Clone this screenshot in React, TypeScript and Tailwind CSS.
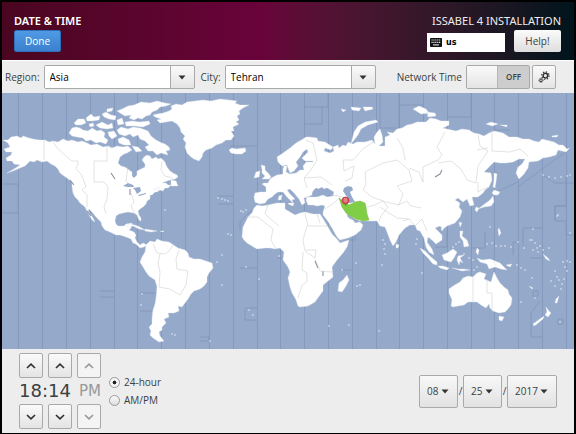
import React, { useState } from 'react';

const ZONE_LINES = [
  18, 42, 66, 90, 114, 137, 161, 185, 209, 233, 257, 280, 304, 328, 352, 376, 399, 423, 447, 471,
  494, 518, 542, 566,
];

// Timezone boundaries that leave the straight meridians
const ZONE_DETOURS = [
  'M2 184H18V213H2',
  'M230 146H257M218 196H233M218 204H233',
  'M304 107H328V93M304 124H322V107M399 105H423M399 93V128H380V93',
  'M447 117H471V93M494 130H510',
  'M518 187L542 169L570 149M542 175L555 183H574M555 220V206H566V175',
  'M494 193L518 182',
  'M555 221V206H566M555 221H566V235H574M523 246V228H542M513 255V242H518',
  'M530 258H542M540 301L531 313V337H542M485 232V248H471',
  'M100 291H114M100 297H114M140 293H157M140 311H153M200 337H209V341H200',
  'M240 268H257M257 308H245V320H257M277 258H282M340 270H352M347 240H355V235',
  'M252 210L240 222V230M447 230V247H435',
  'M533 291H538V296H533ZM558 319H563V324H558Z',
];

const LAND = [
  // North and Central America
  'M3 140L8 140L11 137L17 136L21 138L23 136L29 138L33 139L39 140L45 140L49 142L53 141L58 142L63 139L68 141L72 140L78 142L82 141L87 143L91 145L97 144L103 147L108 146L112 148L117 146L123 147L128 146L132 150L127 153L124 154L120 157L118 163L121 166L125 167L129 170L132 172L132 176L134 178L137 175L137 171L141 169L145 167L145 164L142 160L144 157L147 155L150 156L152 159L156 157L158 159L161 158L165 162L166 165L167 167L170 171L173 173L177 175L178 177L175 179L170 180L167 181L162 183L166 183L168 185L171 185L168 188L165 188L163 191L160 190L157 192L155 192L152 195L150 195L150 199L147 201L146 204L143 207L140 209L138 211L139 215L141 218L141 221L139 220L137 215L134 213L128 212L123 213L119 214L116 216L115 221L116 224L118 226L124 226L126 224L132 223L131 228L129 230L134 232L136 235L135 238L137 242L140 245L143 243L147 245L144 247L140 248L136 244L133 243L131 239L126 237L120 235L116 235L110 232L105 230L102 226L101 222L96 217L92 212L89 209L88 211L93 218L95 222L92 220L88 213L85 207L80 203L78 200L75 197L73 193L72 187L72 182L67 178L64 176L60 173L58 169L55 166L51 164L47 161L42 162L37 160L34 162L30 161L25 166L20 168L13 171L7 173L14 169L20 165L14 164L12 161L7 161L6 158L11 155L12 152L6 152L4 149L10 147L8 143Z',
  // Canadian arctic
  'M120 113L117 111L122 109L128 106L134 105L141 102L150 103L157 101L165 103L171 104L166 106L160 107L157 110L152 112L150 115L146 116L142 119L138 118L134 120L129 118L131 115L125 116Z',
  'M125 122L132 121L140 122L149 121L150 124L143 127L134 126L126 126Z',
  'M117 130L121 127L128 129L133 127L140 128L148 131L151 136L156 140L162 143L165 144L169 147L170 150L166 151L168 155L161 153L157 155L153 151L148 151L145 147L149 145L145 141L140 139L138 135L133 137L130 134L125 136L119 134Z',
  'M72 128L76 127L80 128L83 130L88 131L92 128L97 131L101 130L105 133L104 137L108 140L106 144L100 142L96 143L91 140L86 141L83 138L77 137L72 136L69 133Z',
  'M74 123L78 119L84 119L86 123L81 125L76 125Z',
  'M86 118L91 114L94 117L100 116L99 120L92 121L87 121Z',
  'M96 125L102 122L108 125L112 123L113 128L107 129L100 128Z',
  'M102 114L106 112L111 115L116 116L115 120L109 119L104 117Z',
  'M118 139L123 137L129 140L131 145L124 145L119 143Z',
  'M108 132L114 131L117 136L112 139L109 136ZM117 120L122 118L124 124L118 125ZM132 146L138 147L142 151L136 152ZM107 109L113 108L112 111L107 112ZM89 124L93 123L94 126L90 127Z',
  'M171 180L176 181L178 186L171 186ZM154 188L159 187L159 189L154 190Z',
  // Greenland and Iceland
  'M153 115L157 114L163 113L169 111L172 109L171 106L176 104L182 105L187 102L195 101L203 100L211 101L220 99L229 100L237 101L235 103L240 105L249 105L243 108L239 111L240 114L237 116L239 120L236 122L239 124L233 127L234 131L231 131L234 136L231 140L226 140L222 143L216 145L212 148L206 150L203 153L202 157L199 161L194 159L191 157L187 153L185 147L186 143L183 139L185 136L181 132L180 128L177 124L172 121L166 122L160 123L157 120L161 119L155 117Z',
  'M229 150L232 148L236 149L245 148L246 151L242 154L236 154L231 153Z',
  // South America
  'M146 245L150 241L155 242L157 239L162 241L169 242L172 244L178 248L185 250L188 253L189 257L194 259L200 259L206 261L212 263L213 268L209 273L207 277L207 282L204 286L200 289L194 291L191 294L188 299L185 303L182 307L178 306L179 311L174 313L168 313L169 317L164 319L166 323L162 327L162 330L159 332L160 336L164 341L159 342L153 338L150 335L151 331L149 327L152 324L152 318L153 310L155 304L156 298L157 287L155 280L149 276L146 272L143 267L140 262L142 257L145 252Z',
  // Caribbean
  'M126 226L131 224L138 226L145 230L139 229L133 226L128 227ZM145 229L151 230L157 231L151 232L145 231ZM160 231L164 231L163 232Z',
  // Europe and Asia
  'M255 202L254 197L255 193L260 192L266 192L266 187L262 184L264 183L268 183L270 179L273 177L277 175L283 174L283 169L284 166L287 166L286 172L290 174L296 173L300 170L304 170L303 166L306 162L313 162L313 161L305 161L302 158L305 155L308 152L307 149L303 152L300 157L296 162L298 166L294 171L290 173L288 168L287 165L282 166L278 162L277 157L283 153L290 148L296 143L303 139L306 137L310 137L317 138L318 141L325 142L333 147L331 150L325 148L324 151L330 153L334 151L333 147L338 145L339 148L343 145L346 146L348 142L353 144L357 142L365 142L372 140L375 144L374 137L377 132L380 129L382 135L383 142L379 146L385 146L385 137L390 135L387 132L393 133L397 129L402 128L407 125L412 124L417 122L426 122L430 118L436 119L441 121L449 121L449 125L443 128L447 129L456 131L462 129L469 130L474 133L479 134L484 136L489 133L494 131L503 133L509 137L517 137L523 139L529 139L534 141L539 142L542 139L554 142L559 145L563 145L567 149L570 148L566 152L558 150L556 155L549 157L543 158L538 161L529 162L528 168L524 174L519 179L516 173L518 167L522 164L525 159L519 159L513 162L506 163L500 163L494 162L490 166L484 172L491 173L492 180L489 187L485 190L483 193L478 197L472 197L474 205L470 206L467 199L463 202L458 198L455 200L460 203L459 207L462 211L460 217L455 223L447 226L443 229L440 226L435 228L439 232L442 235L442 240L436 244L432 240L428 237L427 242L432 249L434 255L429 252L426 247L424 238L420 231L417 230L415 225L410 225L405 228L399 235L396 242L393 246L390 240L387 232L385 227L380 226L377 221L368 221L360 221L353 218L348 213L347 216L350 219L353 220L355 223L360 222L363 225L361 230L355 235L348 238L340 240L337 237L332 228L327 220L323 215L323 212L325 206L322 205L317 206L313 205L308 205L306 200L307 197L317 197L323 195L327 197L333 196L334 192L327 188L325 190L322 187L318 189L316 188L313 192L312 195L307 197L304 198L305 203L302 205L299 199L294 193L290 189L287 190L290 194L295 199L292 200L293 203L287 197L283 192L278 192L275 194L272 197L268 199L265 203L260 204L257 203Z',
  'M351 144L354 132L358 126L365 122L376 120L378 122L368 125L361 129L358 135Z',
  'M341 109L346 110L343 112ZM351 107L361 108L359 111L352 110ZM363 107L372 107L373 109L365 111ZM413 109L419 106L426 109L429 113L421 114ZM427 112L435 113L436 116L428 117ZM486 124L491 122L498 124L492 126ZM500 125L507 125L507 127ZM552 136L558 135L557 137L552 137Z',
  // Britain and Ireland
  'M261 165L265 166L265 170L269 174L271 177L269 179L262 179L265 176L262 173L262 169ZM256 172L260 171L259 177L254 178Z',
  // Africa
  'M257 205L262 206L268 205L277 203L285 203L285 209L290 212L295 215L300 213L305 212L313 214L320 214L322 217L328 227L332 234L337 239L340 243L349 240L347 247L343 253L337 260L332 267L333 277L328 281L323 285L323 291L320 295L315 302L308 306L300 307L298 306L296 300L295 298L292 293L290 287L288 278L290 272L288 267L283 260L284 252L280 248L275 249L270 248L265 248L257 249L247 243L244 240L242 237L243 227L246 221L248 217L252 213L254 208Z',
  'M347 275L349 280L346 286L342 292L338 291L339 283L343 280Z',
  'M289 203L294 203L293 206L288 204ZM279 196L282 195L281 200L278 200Z',
  // Australia and New Zealand
  'M449 289L453 286L460 282L463 278L468 276L473 277L477 273L480 272L486 274L484 279L491 282L494 272L497 278L500 283L504 287L508 290L509 294L512 298L511 305L508 309L505 312L499 313L493 311L490 308L489 304L486 308L481 305L477 302L468 302L464 305L458 306L453 307L451 306L452 300L449 293Z',
  'M499 316L504 317L502 321L499 320ZM546 307L549 311L551 313L548 317L545 315L547 312ZM544 316L543 319L537 324L534 326L533 324Z',
  // Japan and Sakhalin
  'M494 173L497 174L496 182L495 188L493 187L494 180ZM494 190L500 192L498 195L494 195L492 193ZM493 196L494 202L491 206L484 207L478 209L486 203L490 200ZM476 207L479 208L477 212L475 210Z',
  // South east Asia and Oceania
  'M420 248L425 251L431 257L437 262L437 265L433 264L428 258L423 253ZM438 266L443 266L449 268L447 270L440 268Z',
  'M442 255L447 253L453 249L457 252L454 258L451 262L444 260Z',
  'M458 256L464 255L460 258L463 263L460 261L459 265L457 260Z',
  'M477 258L482 260L490 259L500 263L507 270L501 269L495 267L489 269L487 264L480 262Z',
  'M460 231L463 231L462 236L467 240L469 246L464 247L463 241L460 237ZM459 222L462 223L460 227ZM441 228L444 228L442 231ZM396 244L399 245L398 248L396 248ZM493 262L496 262L496 266ZM506 265L512 264L510 267Z',
  'M452 268L458 269L464 269L470 270L462 271ZM477 248L479 250L478 255L476 252ZM499 228L501 233L499 236L498 230ZM543 254L548 258L550 261L546 259ZM556 299L559 296L557 303L555 303ZM529 286L533 288L532 289Z',
];

const ISLETS: [number, number][] = [
  [218, 198], [222, 199], [225, 200], [228, 201], [165, 210], [241, 211], [243, 212], [246, 210],
  [222, 255], [217, 262], [222, 285], [228, 234], [231, 235], [142, 294], [141, 305], [172, 334],
  [175, 335], [210, 341], [246, 267], [259, 279], [279, 256], [249, 310], [253, 315], [329, 326],
  [349, 325], [379, 331], [342, 270], [356, 263], [357, 286], [360, 285], [383, 240], [385, 244],
  [384, 249], [385, 254], [382, 265], [417, 239], [416, 244], [422, 273], [543, 175], [549, 177],
  [555, 178], [561, 177], [567, 176], [570, 175], [558, 215], [557, 216], [501, 246], [487, 244],
  [492, 243], [496, 246], [505, 246], [511, 247], [518, 242], [524, 248], [532, 240], [535, 243],
  [537, 248], [533, 250], [538, 252], [533, 229], [530, 240], [540, 246], [543, 250], [549, 248],
  [517, 265], [521, 268], [525, 270], [532, 278], [551, 281], [555, 271], [557, 277], [563, 262],
  [567, 261], [570, 262], [559, 280], [562, 284], [561, 289], [564, 279], [567, 271], [521, 302],
  [535, 298], [560, 322], [469, 258], [473, 260], [477, 267], [474, 270], [490, 227], [456, 244],
  [459, 242], [453, 247], [464, 254], [555, 286], [565, 267], [570, 233],
];

// Borders between zones on dry land
const LAND_ZONES = [
  'M44 140V160M53 142L58 149L66 156L72 161L78 161L78 164L76 169L81 174L84 181L86 187L82 190L87 195L87 207',
  'M107 146V161H94V182H104L108 187L107 199L104 207L106 214M128 167L126 181L130 186M131 193L134 202L131 206L134 212',
  'M162 161L161 170L165 176L173 178M153 244L157 253L165 254L170 250L173 245M160 254L158 263L160 272L159 287L170 289L180 295L186 285L188 271L177 269L176 259L179 250',
  'M306 140L313 143L317 160L311 170L304 178L307 188M304 178L321 177L332 185M332 195L347 198M317 214L320 223M325 209L334 203L339 198',
  'M373 142L363 149L353 160L343 160L344 171L354 166L352 178L345 181M363 190L372 197L386 202L399 205L403 194L397 186L412 181L409 170L397 160L383 163L365 172L366 184L363 190',
  'M397 138L403 148L405 160M409 168L419 172L423 182L423 167L438 160L442 155L437 147L445 132M438 163L451 161L461 169L467 180L476 183L478 166L488 151L480 146L478 135',
  'M492 130L492 151L510 152L520 149L528 156M488 148L477 150M478 182V192L488 187M398 205L407 201L411 206L421 208M367 207L375 205L383 201L388 207L381 216L379 222M380 207L389 213L397 218L409 219M403 221L409 219L415 226L422 219L427 231M347 214L355 222',
  'M246 217L258 217L273 229L271 240L276 249M268 205L265 214L279 226M305 213L308 226H330M307 226L303 240L305 251L315 258L316 250L306 250M303 252L302 270L307 273V282L302 285L298 298M315 259L320 271L332 272',
  'M473 276V302M487 279V293H492V312',
];

const UTILITY_BTN =
  'flex items-center justify-center rounded-[2px] border border-[#a9a9a9] bg-linear-to-b from-[#fafafa] to-[#e4e4e4] text-[#2e3436]';

const Arrow: React.FC<{ className?: string }> = ({ className = '' }) => (
  <svg viewBox="0 0 8 5" className={`pointer-events-none h-[5px] w-2 fill-[#333] ${className}`}>
    <path d="M0.5 0.5h7L4 4.6z" />
  </svg>
);

const Combo: React.FC<{ id: string; label: string; options: string[] }> = ({
  id,
  label,
  options,
}) => (
  <div className="flex items-center gap-1">
    <label htmlFor={id}>{label}</label>
    <div className="grid h-6 w-[151px] grid-cols-[1fr_24px] rounded-[2px] border border-[#a9a9a9] bg-linear-to-b from-[#fafafa] to-[#e4e4e4]">
      <select
        id={id}
        className="col-span-2 col-start-1 row-start-1 appearance-none bg-transparent bg-linear-to-r from-white to-white bg-size-[126px_100%] bg-no-repeat pl-[5px] text-black outline-none"
      >
        {options.map((o) => (
          <option key={o}>{o}</option>
        ))}
      </select>
      <div className="pointer-events-none col-start-2 row-start-1 flex items-center justify-center border-l border-[#a9a9a9]">
        <Arrow />
      </div>
    </div>
  </div>
);

const DatePart: React.FC<{ label: string; value: string; wide?: boolean }> = ({
  label,
  value,
  wide,
}) => (
  <div
    className={`grid h-[33px] items-center rounded-[2px] border border-[#a9a9a9] bg-linear-to-b from-[#f8f8f8] to-[#e2e2e2] ${
      wide ? 'w-[50px]' : 'w-[39px]'
    }`}
  >
    <select
      aria-label={label}
      className="col-start-1 row-start-1 h-full w-full appearance-none pl-[7px] outline-none"
    >
      <option>{value}</option>
    </select>
    <Arrow className="col-start-1 row-start-1 mr-2 justify-self-end" />
  </div>
);

const StepButton: React.FC<{ label: string; down?: boolean; disabled?: boolean }> = ({
  label,
  down,
  disabled,
}) => (
  <button
    type="button"
    aria-label={label}
    disabled={disabled}
    className={`h-[25px] w-6 ${UTILITY_BTN} disabled:from-[#f4f4f4] disabled:to-[#f4f4f4] disabled:text-[#999]`}
  >
    <svg viewBox="0 0 10 6" className="h-1.5 w-2.5 fill-none stroke-current stroke-[1.7]">
      <path d={down ? 'M1 1l4 3.8L9 1' : 'M1 5l4-3.8L9 5'} />
    </svg>
  </button>
);

const WorldMap: React.FC = () => (
  <svg viewBox="2 93 572 256" className="block w-full bg-[#95a9cb]" aria-label="Timezone map">
    <g fill="none" stroke="#8095b9" strokeWidth="0.8">
      {ZONE_LINES.map((x) => (
        <path key={x} d={`M${x + 0.5} 93V349`} />
      ))}
      {ZONE_DETOURS.map((d) => (
        <path key={d} d={d} />
      ))}
    </g>
    <g fill="#fff" stroke="#dfe5ee" strokeWidth="0.4" strokeLinejoin="round">
      {LAND.map((d) => (
        <path key={d} d={d} />
      ))}
    </g>
    <g fill="#e9eef6">
      {ISLETS.map(([x, y], i) => (
        <circle key={i} cx={x} cy={y} r="0.8" />
      ))}
    </g>
    {/* Inland water */}
    <g fill="#95a9cb">
      <path d="M344 188L348 186L352 187L353 190L350 192L352 197L355 202L349 203L347 197L343 191Z" />
      <path d="M123 186L128 183L133 185L134 187L128 187ZM133 188L140 187L141 191L137 194L135 190ZM138 195L146 193L146 194L139 196Z" />
      <path d="M313 191L316 188L320 190L327 188L333 192L333 195L324 194L317 196L312 194Z" />
    </g>
    <g fill="none" stroke="#8a929d" strokeWidth="1.1">
      <path d="M111 173L115 179M130 189L130 195M70 180L74 185M87 211L91 216M435 177L440 174L442 170M315 261L318 268M323 271V276" />
    </g>
    <g fill="none" stroke="#c6c6c6" strokeWidth="0.5">
      {LAND_ZONES.map((d) => (
        <path key={d} d={d} />
      ))}
    </g>
    <path
      d="M339 198L342 200L345 202L349 205L355 202L360 201L365 203L366 207L367 214L369 220L363 221L356 219L352 217L346 213L342 207Z"
      fill="#80cd46"
      stroke="#78b84b"
      strokeWidth="0.5"
    />
    <circle cx="345.5" cy="200.5" r="3.4" fill="#e05a62" stroke="#b3323c" strokeWidth="0.8" />
    <path d="M344 199h3M344 201h3" stroke="#f6b4b8" strokeWidth="0.8" />
    <path d="M344.5 204h2l-1 2z" fill="#9c5a3c" />
  </svg>
);

export default function App() {
  const [hour24, setHour24] = useState(true);
  const [networkTime, setNetworkTime] = useState(false);

  return (
    <div className="min-h-screen border-2 border-black bg-[#ededed] font-['Open_Sans','Noto_Sans',sans-serif] text-[10px] leading-4 text-[#3a3f41]">
      <header className="flex justify-between bg-linear-to-r from-[#4a0620] via-[#69033a] via-45% to-[#00141c] pt-[10px] pr-[13px] pb-2 pl-3">
        <div>
          <h1 className="font-['Noto_Sans',sans-serif] text-[11px] leading-[18px] font-semibold text-white">
            DATE &amp; TIME
          </h1>
          <button
            type="button"
            className="h-[22px] w-[47px] rounded-[2px] border border-[#2d6fb8] bg-linear-to-b from-[#509ae4] to-[#3a80cf] text-white"
          >
            Done
          </button>
        </div>
        <div className="flex flex-col items-end">
          <h2 className="font-['Noto_Sans',sans-serif] text-[11px] leading-[18px] text-[#eee]">
            ISSABEL 4 INSTALLATION
          </h2>
          <div className="flex items-end gap-[9px]">
            <button
              type="button"
              className="flex h-[19px] w-[78px] items-center gap-1 bg-white pl-[3px] font-['DejaVu_Sans',sans-serif] text-[8px] font-bold text-black"
            >
              <svg viewBox="0 0 12 9" className="h-[9px] w-3">
                <rect width="12" height="9" rx="0.8" fill="#111" />
                <path
                  d="M1.5 2h9M1.5 4.3h9"
                  stroke="#fff"
                  strokeWidth="1.2"
                  strokeDasharray="1.1 0.8"
                />
                <path d="M3 6.9h6" stroke="#fff" strokeWidth="1" />
              </svg>
              us
            </button>
            <button
              type="button"
              className="h-[22px] w-[47px] rounded-[2px] bg-linear-to-b from-[#fbfbfb] to-[#dedede]"
            >
              Help!
            </button>
          </div>
        </div>
      </header>

      <div className="flex h-[33px] items-center gap-[6px] border-t border-white pr-[18px] pl-[3px]">
        <Combo id="region" label="Region:" options={['Asia', 'Europe', 'Africa', 'America']} />
        <Combo id="city" label="City:" options={['Tehran', 'Tokyo', 'Dubai']} />
        <div className="ml-auto flex items-center gap-[2px]">
          <span id="nt-label" className="mr-[2px]">
            Network Time
          </span>
          <button
            type="button"
            role="switch"
            aria-labelledby="nt-label"
            aria-checked={networkTime}
            onClick={() => setNetworkTime(!networkTime)}
            className="flex h-6 w-16 rounded-[2px] border border-[#a9a9a9] bg-[#cdcdcd] text-[8px] font-semibold"
          >
            <span className="h-full w-1/2 border-r border-[#b5b5b5] bg-linear-to-b from-[#fafafa] to-[#e4e4e4]" />
            <span className="flex h-full w-1/2 items-center justify-center">
              {networkTime ? 'ON' : 'OFF'}
            </span>
          </button>
          <button type="button" aria-label="Configure NTP" className={`h-6 w-6 ${UTILITY_BTN}`}>
            <svg viewBox="0 0 12 12" className="size-3 fill-none stroke-[#333]">
              <circle cx="7.4" cy="4.6" r="2.3" strokeWidth="1.5" />
              <circle cx="7.4" cy="4.6" r="3.7" strokeWidth="1.2" strokeDasharray="1.3 1.6" />
              <circle cx="3" cy="9.3" r="1.3" strokeWidth="1" />
              <circle cx="3" cy="9.3" r="2.2" strokeWidth="0.8" strokeDasharray="0.9 0.9" />
            </svg>
          </button>
        </div>
      </div>

      <WorldMap />

      <footer className="flex items-center justify-between pt-1 pr-[17px] pb-1 pl-[17px]">
        <div className="flex items-center gap-2">
          <div>
            <div className="flex gap-[5px]">
              <StepButton label="Hour up" />
              <StepButton label="Minute up" />
              <StepButton label="Period up" disabled />
            </div>
            <div className="flex h-[26px] items-center justify-between font-['DejaVu_Sans',sans-serif]">
              <span className="text-[18px]">18:14</span>
              <span className="text-[15px] text-[#999]">PM</span>
            </div>
            <div className="flex gap-[5px]">
              <StepButton label="Hour down" down />
              <StepButton label="Minute down" down />
              <StepButton label="Period down" down disabled />
            </div>
          </div>
          <div className="flex flex-col gap-[2px]">
            {['24-hour', 'AM/PM'].map((name, i) => (
              <label key={name} className="flex items-center gap-1">
                <input
                  type="radio"
                  name="format"
                  checked={hour24 === (i === 0)}
                  onChange={() => setHour24(i === 0)}
                  className="size-[11px] appearance-none rounded-full border border-[#999] bg-linear-to-b from-[#fafafa] to-[#dedede] checked:bg-radial checked:from-[#222] checked:from-25% checked:to-[#f4f4f4] checked:to-35%"
                />
                {name}
              </label>
            ))}
          </div>
        </div>
        <div className="flex items-center">
          <DatePart label="Month" value="08" />
          <span className="w-[5px] text-center">/</span>
          <DatePart label="Day" value="25" />
          <span className="w-[5px] text-center">/</span>
          <DatePart label="Year" value="2017" wide />
        </div>
      </footer>
    </div>
  );
}
